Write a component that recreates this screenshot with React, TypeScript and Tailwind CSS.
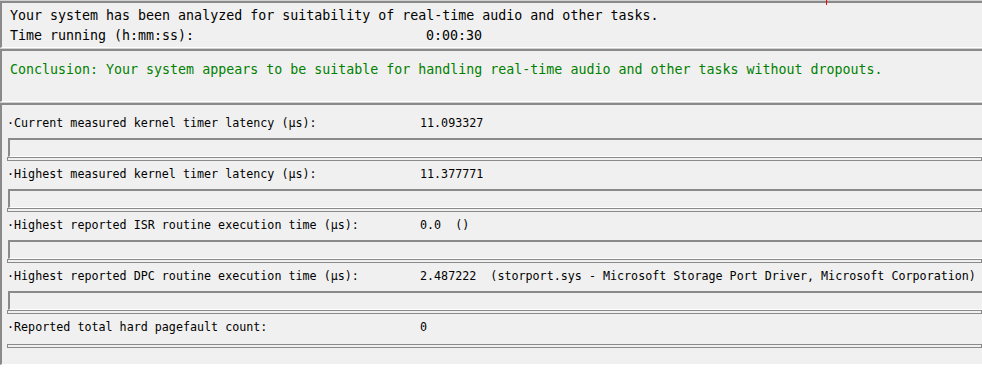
import React from 'react';

const mono = { fontFamily: '"DejaVu Sans Mono", "Liberation Mono", monospace' };

interface Metric {
  label: string;
  value: string;
  bar?: boolean;
}

const metrics: Metric[] = [
  { label: 'Current measured kernel timer latency (µs):', value: '11.093327', bar: true },
  { label: 'Highest measured kernel timer latency (µs):', value: '11.377771', bar: true },
  { label: 'Highest reported ISR routine execution time (µs):', value: '0.0  ()', bar: true },
  {
    label: 'Highest reported DPC routine execution time (µs):',
    value: '2.487222  (storport.sys - Microsoft Storage Port Driver, Microsoft Corporation)',
    bar: true,
  },
  { label: 'Reported total hard pagefault count:', value: '0', bar: false },
];

function Panel({ children, className = '' }: { children: React.ReactNode; className?: string }) {
  return (
    <div className="border-t border-[#d0d0d0]">
      <div className={`border-t-2 border-l-2 border-b border-[#8a8a8a] border-b-white bg-[#f0f0f0] ${className}`}>
        {children}
      </div>
    </div>
  );
}

function MetricRow({ label, value, bar }: Metric) {
  return (
    <div className="pt-[5px]">
      <div className="flex h-4 items-center text-[11.7px] leading-4 text-black whitespace-pre">
        <span className="w-[413px] shrink-0">·{label}</span>
        <span>{value}</span>
      </div>
      {bar ? (
        <div className="mt-[7px] pl-[1px]">
          <div className="h-[19px] border-t-2 border-l-2 border-b border-[#8a8a8a] border-b-white" />
        </div>
      ) : (
        <div className="mt-[9px]" />
      )}
      <div className="h-1 border border-[#8a8a8a] bg-[#f0f0f0]" />
    </div>
  );
}

export default function App() {
  return (
    <div className="relative w-[982px] h-[384px] overflow-hidden bg-white" style={mono}>
      <div className="absolute left-[826px] top-0 h-[5px] w-px bg-[#ff0000]" />

      <Panel className="pl-2 pt-[3px] pb-[1px] text-[13.3px] leading-5 text-black">
        <div className="h-5 whitespace-pre">Your system has been analyzed for suitability of real-time audio and other tasks.</div>
        <div className="flex h-5 whitespace-pre">
          <span className="w-[416px] shrink-0">Time running (h:mm:ss):</span>
          <span>0:00:30</span>
        </div>
      </Panel>

      <Panel className="h-[53px] pl-2 pt-[9px] text-[13.3px] leading-5 text-[#008000]">
        <div className="whitespace-pre">Conclusion: Your system appears to be suitable for handling real-time audio and other tasks without dropouts.</div>
      </Panel>

      <Panel className="h-[262px] pl-[5px] pt-[5px]">
        {metrics.map((m) => (
          <MetricRow key={m.label} {...m} />
        ))}
      </Panel>
    </div>
  );
}
